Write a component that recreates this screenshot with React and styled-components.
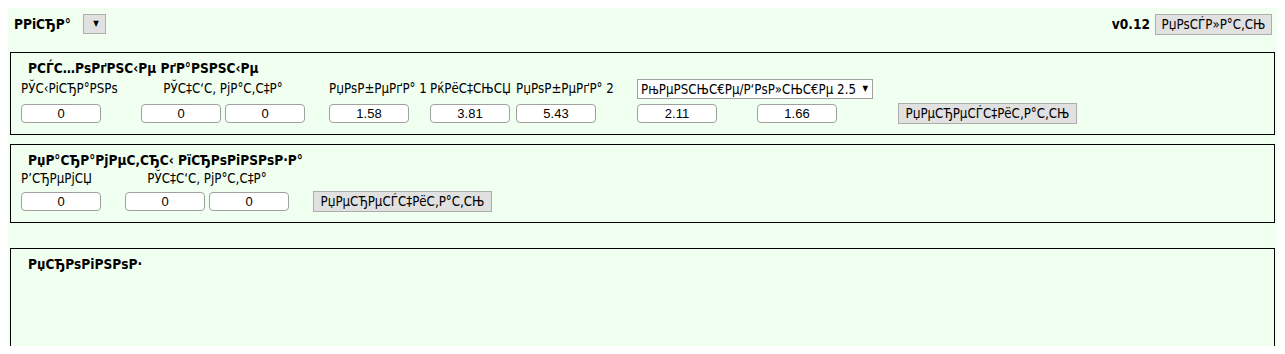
import React from "react";
import styled, { createGlobalStyle } from "styled-components";

const UI_FONT = `"DejaVu Sans Condensed", "DejaVu Sans", sans-serif`;
const UI_SIZE = "13.2px";
const BOLD_SIZE = "13.6px";

const GlobalStyle = createGlobalStyle`
  html, body { margin: 0; padding: 0; }
  body {
    margin: 8px;
    background: #ffffff;
    font-family: ${UI_FONT};
    font-size: ${UI_SIZE};
    color: #000;
  }
`;

const Page = styled.div`
  background: #f0fff0;
  box-shadow: 0 0 8px rgba(0, 0, 0, 0.28);
  height: calc(100vh - 16px);
  overflow: hidden;
  display: flex;
  flex-direction: column;
`;

const Header = styled.div`
  height: 32px;
  flex-shrink: 0;
  display: flex;
  align-items: center;
  justify-content: space-between;
  padding: 0 5px 0 6px;
`;

const Side = styled.div`
  display: flex;
  align-items: center;
  gap: ${(p) => p.$gap || 0}px;
`;

const Strong = styled.span`
  font-weight: bold;
  font-size: ${BOLD_SIZE};
  line-height: 16px;
`;

const SelectWrap = styled.div`
  position: relative;
  width: ${(p) => p.$w}px;
  height: ${(p) => p.$h}px;
  grid-column: ${(p) => p.$col || "auto"};
  align-self: center;
`;

const NativeSelect = styled.select`
  appearance: none;
  -webkit-appearance: none;
  width: 100%;
  height: 100%;
  box-sizing: border-box;
  margin: 0;
  padding: 0 14px 0 3px;
  border: 1px solid ${(p) => (p.$plain ? "#a0a0a0" : "#adadad")};
  background: ${(p) => (p.$plain ? "#ffffff" : "#e1e1e1")};
  border-radius: 0;
  font-family: ${UI_FONT};
  font-size: ${UI_SIZE};
  color: #000;
  outline: none;
`;

const Arrow = styled.span`
  position: absolute;
  right: ${(p) => p.$r}px;
  top: 50%;
  transform: translateY(-50%);
  font-size: 8px;
  line-height: 8px;
  color: #000;
  pointer-events: none;
`;

const Button = styled.button`
  height: 21px;
  box-sizing: border-box;
  width: ${(p) => p.$w}px;
  margin: 0 0 0 ${(p) => p.$ml || 0}px;
  padding: 0;
  border: 1px solid #adadad;
  background: #e1e1e1;
  font-family: ${UI_FONT};
  font-size: ${UI_SIZE};
  color: #000;
  justify-self: start;
  align-self: center;
`;

const Section = styled.section`
  margin: ${(p) => p.$mt}px 2px 0;
  border: 1px solid #000;
  padding: 7px 10px 10px;
  flex-shrink: 0;
  min-height: ${(p) => p.$minH || 0}px;
`;

const Title = styled.div`
  font-weight: bold;
  font-size: ${BOLD_SIZE};
  line-height: 16px;
  padding-left: 7px;
  margin-bottom: 3px;
`;

const Grid = styled.div`
  display: grid;
  grid-template-columns: ${(p) => p.$cols};
  column-gap: 4px;
  row-gap: 4px;
  align-items: center;
`;

const Label = styled.div`
  line-height: 16px;
  white-space: nowrap;
  grid-column: ${(p) => p.$col || "auto"};
  text-align: ${(p) => (p.$center ? "center" : "left")};
  padding-right: ${(p) => p.$pr || 0}px;
`;

const Field = styled.input`
  width: 80px;
  height: 19px;
  box-sizing: border-box;
  margin: 0;
  padding: 0;
  border: 1px solid #a0a0a0;
  border-radius: 4px;
  background: #fff;
  text-align: center;
  font-family: "Liberation Sans", Arial, sans-serif;
  font-size: 13px;
  color: #000;
  justify-self: start;
`;

const Spacer = styled.div``;

export default function App() {
  return (
    <>
      <GlobalStyle />
      <Page>
        <Header>
          <Side $gap={12}>
            <Strong>РРіСЂР°</Strong>
            <SelectWrap $w={23} $h={20}>
              <NativeSelect defaultValue="">
                <option value=""></option>
              </NativeSelect>
              <Arrow $r={7}>▼</Arrow>
            </SelectWrap>
          </Side>
          <Side $gap={5}>
            <Strong>v0.12</Strong>
            <Button $w={117}>РџРѕСЃР»Р°С‚СЊ</Button>
          </Side>
        </Header>

        <Section $mt={12}>
          <Title>РСЃС…РѕРґРЅС‹Рµ РґР°РЅРЅС‹Рµ</Title>
          <Grid $cols="116px 80px 100px 97px 82px 117px 116px 116px auto">
            <Label>РЎС‹РіСЂР°РЅРѕ</Label>
            <Label $col="span 2" $center $pr={20}>
              РЎС‡С‘С‚ РјР°С‚С‡Р°
            </Label>
            <Label>РџРѕР±РµРґР° 1</Label>
            <Label>РќРёС‡СЊСЏ</Label>
            <Label>РџРѕР±РµРґР° 2</Label>
            <SelectWrap $w={236} $h={20} $col="span 2">
              <NativeSelect $plain defaultValue="u25">
                <option value="u25">РњРµРЅСЊС€Рµ/Р‘РѕР»СЊС€Рµ 2.5</option>
              </NativeSelect>
              <Arrow $r={5}>▼</Arrow>
            </SelectWrap>
            <Spacer />

            <Field defaultValue="0" />
            <Field defaultValue="0" />
            <Field defaultValue="0" />
            <Field defaultValue="1.58" />
            <Field defaultValue="3.81" />
            <Field defaultValue="5.43" />
            <Field defaultValue="2.11" />
            <Field defaultValue="1.66" />
            <Button $w={179} $ml={21}>
              РџРµСЂРµСЃС‡РёС‚Р°С‚СЊ
            </Button>
          </Grid>
        </Section>

        <Section $mt={9}>
          <Title>РџР°СЂР°РјРµС‚СЂС‹ РїСЂРѕРіРЅРѕР·Р°</Title>
          <Grid $cols="100px 80px 80px auto">
            <Label>Р’СЂРµРјСЏ</Label>
            <Label $col="span 2" $center>
              РЎС‡С‘С‚ РјР°С‚С‡Р°
            </Label>
            <Spacer />

            <Field defaultValue="0" />
            <Field defaultValue="0" />
            <Field defaultValue="0" />
            <Button $w={179} $ml={20}>
              РџРµСЂРµСЃС‡РёС‚Р°С‚СЊ
            </Button>
          </Grid>
        </Section>

        <Section $mt={25} $minH={200}>
          <Title>РџСЂРѕРіРЅРѕР·</Title>
        </Section>
      </Page>
    </>
  );
}
